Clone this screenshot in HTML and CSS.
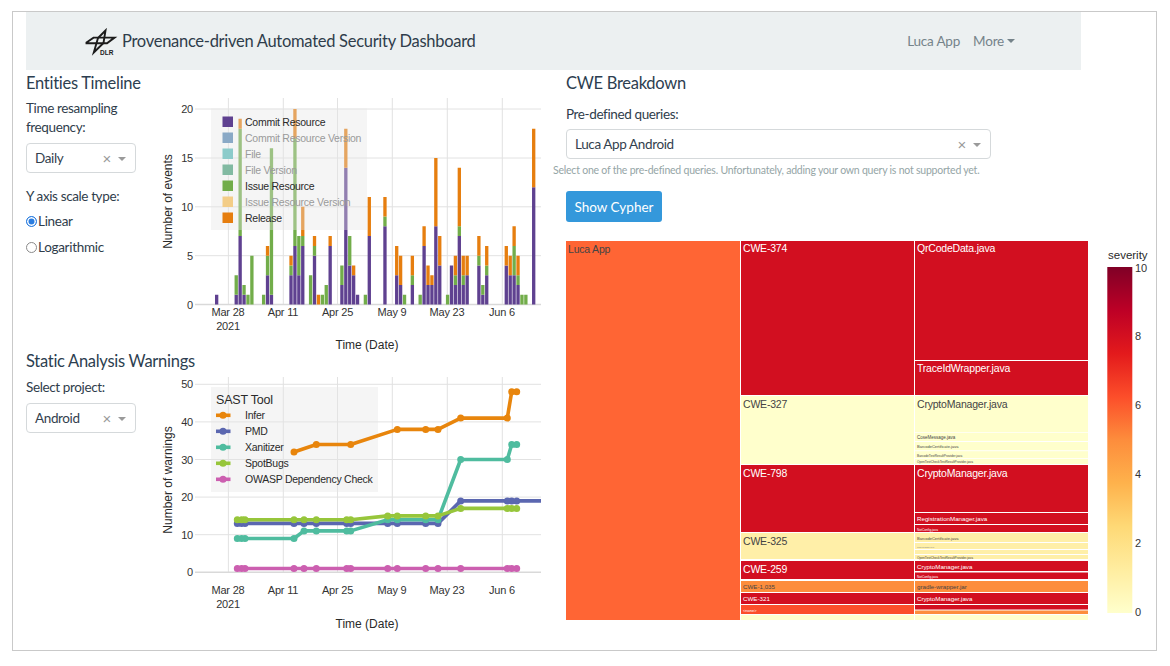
FILE: index.html
```html
<!DOCTYPE html>
<html lang="en">
<head>
<meta charset="utf-8">
<title>Provenance-driven Automated Security Dashboard</title>
<link rel="stylesheet" href="styles.css">
</head>
<body>
<div class="frame">
  <nav class="navbar">
    <div class="brand">
      <svg class="logo" viewBox="84 26 34 28" width="34" height="28" aria-label="DLR logo">
        <path class="logo-line" d="M86.5 40.5L93.5 35.6H114.5L107 41.2H86.5Z"/>
        <path class="logo-line" d="M105.5 28.5L98 36L93.8 50.5L103.5 41L105.5 28.5Z"/>
        <text class="logo-text" x="100" y="53">DLR</text>
      </svg>
      <span class="brand-name">Provenance-driven Automated Security Dashboard</span>
    </div>
    <div class="nav-links">
      <a class="nav-link">Luca App</a>
      <a class="nav-link">More<span class="caret"></span></a>
    </div>
  </nav>
  <div class="columns">
    <section class="left">
      <h2 class="title">Entities Timeline</h2>
      <div class="panel panel-a">
        <div class="controls">
          <label class="label">Time resampling frequency:</label>
          <div class="select select-narrow"><span class="select-value">Daily</span><span class="clear">×</span><span class="arrow"></span></div>
          <label class="label label-gap">Y axis scale type:</label>
          <div class="radio"><span class="dot dot-on"></span>Linear</div>
          <div class="radio"><span class="dot"></span>Logarithmic</div>
        </div>
        <svg class="chart chart-a" viewBox="150 96 395 256" width="395" height="256">
          <g class="grid">
            <path d="M228.4 98V304M283.3 98V304M337.5 98V304M392.3 98V304M447.3 98V304M502.3 98V304"/>
            <path d="M195 109H541M195 158H541M195 206.8H541M195 255.7H541"/>
          </g>
          <path class="zero" d="M195 304.5H541"/>
          <g transform="translate(228.4 304.5) scale(3.914 -9.77)" class="bars">
            <path class="b-commit" d="M-3 0V1M2 0V1M3 0V7M4 0V1M10 0V3M11 0V1M16 0V3M17 0V6M18 0V3M19 0V6M22 0V5M26 0V6M29 0V2M30 0V14M31 0V4M32 0V3M33 0V1M36 0V7M40 0V8M43 0V3M44 0V2M47 0V2M50 0V6M51 0V2M52 0V2M53 0V8M54 0V4M57 0V4M58 0V2M59 0V7M60 0V2M61 0V3M64 0V4M65 0V1M66 0V3M71 0V4M72 0V3M73 0V3M74 0V2M78 0V12"/>
            <path class="b-issue" d="M2 1V3M3 7V18M4 1V2M5 0V1M6 0V5M9 0V1M10 3V5M11 1V16M16 3V4M17 6V17M18 3V7M19 6V7M21 0V3M22 5V6M24 0V1M25 0V2M29 2V4M31 4V7M35 0V1M40 8V9M45 0V1M47 2V3M49 0V1M56 0V1M58 2V3M59 7V8M60 2V3M64 4V5M65 1V2M66 3V4M73 3V6M74 2V3M75 0V1M76 0V1"/>
            <path class="b-release" d="M3 18V19M10 5V6M16 4V5M17 17V20M19 7V10M22 6V7M23 0V1M26 6V7M30 14V18M32 3V4M36 7V11M40 9V11M43 3V6M44 2V5M47 3V5M50 6V8M51 2V4M52 2V3M53 8V15M54 4V7M58 3V5M59 8V14M60 3V5M61 3V5M64 5V7M66 4V6M71 4V6M72 3V5M73 6V8M74 3V5M78 12V18"/>
          </g>
          <rect class="legend-bg" x="211" y="108.5" width="156" height="121.5"/>
          <g class="swatches">
            <rect class="s-commit" x="222.5" y="116.5" width="10.5" height="10.5"/>
            <rect class="s-commitv" x="222.5" y="132.5" width="10.5" height="10.5"/>
            <rect class="s-file" x="222.5" y="148.5" width="10.5" height="10.5"/>
            <rect class="s-filev" x="222.5" y="164.5" width="10.5" height="10.5"/>
            <rect class="s-issue" x="222.5" y="180.5" width="10.5" height="10.5"/>
            <rect class="s-issuev" x="222.5" y="196.5" width="10.5" height="10.5"/>
            <rect class="s-release" x="222.5" y="212.5" width="10.5" height="10.5"/>
          </g>
          <g class="legend">
            <text x="245" y="125.5">Commit Resource</text>
            <text class="off" x="245" y="141.5">Commit Resource Version</text>
            <text class="off" x="245" y="157.5">File</text>
            <text class="off" x="245" y="173.5">File Version</text>
            <text x="245" y="189.5">Issue Resource</text>
            <text class="off" x="245" y="205.5">Issue Resource Version</text>
            <text x="245" y="221.5">Release</text>
          </g>
          <g class="tick tick-y">
            <text x="193" y="113">20</text>
            <text x="193" y="162">15</text>
            <text x="193" y="211">10</text>
            <text x="193" y="260">5</text>
            <text x="193" y="308.5">0</text>
          </g>
          <g class="tick tick-x">
            <text x="228" y="316">Mar 28</text>
            <text x="228" y="329.5">2021</text>
            <text x="283" y="316">Apr 11</text>
            <text x="337.5" y="316">Apr 25</text>
            <text x="392" y="316">May 9</text>
            <text x="447" y="316">May 23</text>
            <text x="502" y="316">Jun 6</text>
          </g>
          <text class="axis-title" x="367" y="349">Time (Date)</text>
          <text class="axis-title" transform="translate(172 201.5) rotate(-90)">Number of events</text>
        </svg>
      </div>
      <h2 class="title title-b">Static Analysis Warnings</h2>
      <div class="panel panel-b">
        <div class="controls">
          <label class="label">Select project:</label>
          <div class="select select-narrow"><span class="select-value">Android</span><span class="clear">×</span><span class="arrow"></span></div>
        </div>
        <svg class="chart chart-b" viewBox="150 374 395 266" width="395" height="266">
          <g class="grid">
            <path d="M228.4 377V572M283.3 377V572M337.5 377V572M392.3 377V572M447.3 377V572M502.3 377V572"/>
            <path d="M195 384.3H541M195 421.9H541M195 459.5H541M195 497.1H541M195 534.7H541"/>
          </g>
          <path class="zero" d="M195 572.3H541"/>
          <rect class="legend-bg" x="211" y="387" width="167" height="105"/>
          <polyline class="line l-infer" points="294,452 316.3,444.5 350.7,444.5 397.3,429.4 425.7,429.4 438,429.4 460.7,418.1 507.3,418.1 511.7,391.8 516.7,391.8"/>
          <path class="marks l-infer" d="M294 452h0M316.3 444.5h0M350.7 444.5h0M397.3 429.4h0M425.7 429.4h0M438 429.4h0M460.7 418.1h0M507.3 418.1h0M511.7 391.8h0M516.7 391.8h0"/>
          <polyline class="line l-pmd" points="237.3,523.4 245,523.4 294,523.4 350.7,523.4 438,523.4 460.7,500.9 541,500.9"/>
          <path class="marks l-pmd" d="M237.3 523.4h0M241.7 523.4h0M245 523.4h0M294 523.4h0M304 523.4h0M316.3 523.4h0M346.7 523.4h0M350.7 523.4h0M387.7 523.4h0M397.3 523.4h0M425.7 523.4h0M438 523.4h0M460.7 500.9h0M507.3 500.9h0M511.7 500.9h0M516.7 500.9h0"/>
          <polyline class="line l-xan" points="237.3,538.5 294,538.5 304,530.9 350.7,530.9 387.7,519.7 438,519.7 460.7,459.5 507.3,459.5 511.7,444.5 516.7,444.5"/>
          <path class="marks l-xan" d="M237.3 538.5h0M241.7 538.5h0M245 538.5h0M294 538.5h0M304 530.9h0M316.3 530.9h0M346.7 530.9h0M350.7 530.9h0M387.7 519.7h0M397.3 519.7h0M425.7 519.7h0M438 519.7h0M460.7 459.5h0M507.3 459.5h0M511.7 444.5h0M516.7 444.5h0"/>
          <polyline class="line l-spot" points="237.3,519.7 350.7,519.7 387.7,515.9 438,515.9 460.7,508.4 516.7,508.4"/>
          <path class="marks l-spot" d="M237.3 519.7h0M241.7 519.7h0M245 519.7h0M294 519.7h0M304 519.7h0M316.3 519.7h0M346.7 519.7h0M350.7 519.7h0M387.7 515.9h0M397.3 515.9h0M425.7 515.9h0M438 515.9h0M460.7 508.4h0M507.3 508.4h0M511.7 508.4h0M516.7 508.4h0"/>
          <polyline class="line l-owasp" points="237.3,568.5 516.7,568.5"/>
          <path class="marks l-owasp" d="M237.3 568.5h0M241.7 568.5h0M245 568.5h0M294 568.5h0M304 568.5h0M316.3 568.5h0M346.7 568.5h0M350.7 568.5h0M387.7 568.5h0M397.3 568.5h0M425.7 568.5h0M438 568.5h0M460.7 568.5h0M507.3 568.5h0M511.7 568.5h0M516.7 568.5h0"/>
          <g>
            <path class="key l-infer" d="M216 415.3H230.5"/><path class="marks l-infer" d="M223 415.3h0"/>
            <path class="key l-pmd" d="M216 431.3H230.5"/><path class="marks l-pmd" d="M223 431.3h0"/>
            <path class="key l-xan" d="M216 447.3H230.5"/><path class="marks l-xan" d="M223 447.3h0"/>
            <path class="key l-spot" d="M216 463.3H230.5"/><path class="marks l-spot" d="M223 463.3h0"/>
            <path class="key l-owasp" d="M216 479.3H230.5"/><path class="marks l-owasp" d="M223 479.3h0"/>
          </g>
          <text class="legend-title" x="216" y="403.5">SAST Tool</text>
          <g class="legend">
            <text x="245" y="419">Infer</text>
            <text x="245" y="435">PMD</text>
            <text x="245" y="451">Xanitizer</text>
            <text x="245" y="467">SpotBugs</text>
            <text x="245" y="483">OWASP Dependency Check</text>
          </g>
          <g class="tick tick-y">
            <text x="193" y="388.3">50</text>
            <text x="193" y="426">40</text>
            <text x="193" y="463.5">30</text>
            <text x="193" y="501">20</text>
            <text x="193" y="538.7">10</text>
            <text x="193" y="576.3">0</text>
          </g>
          <g class="tick tick-x">
            <text x="228" y="594">Mar 28</text>
            <text x="228" y="607.5">2021</text>
            <text x="283" y="594">Apr 11</text>
            <text x="337.5" y="594">Apr 25</text>
            <text x="392" y="594">May 9</text>
            <text x="447" y="594">May 23</text>
            <text x="502" y="594">Jun 6</text>
          </g>
          <text class="axis-title" x="367" y="628">Time (Date)</text>
          <text class="axis-title" transform="translate(172 480) rotate(-90)">Number of warnings</text>
        </svg>
      </div>
    </section>
    <section class="right">
      <h2 class="title">CWE Breakdown</h2>
      <label class="label label-query">Pre-defined queries:</label>
      <div class="select select-wide"><span class="select-value">Luca App Android</span><span class="clear">×</span><span class="arrow"></span></div>
      <p class="hint">Select one of the pre-defined queries. Unfortunately, adding your own query is not supported yet.</p>
      <button class="button">Show Cypher</button>
      <svg class="treemap" viewBox="566 236 590 390" width="590" height="390">
        <defs>
          <linearGradient id="ylorrd" x1="0" y1="1" x2="0" y2="0">
            <stop offset="0" stop-color="#ffffcc"/>
            <stop offset=".125" stop-color="#ffeda0"/>
            <stop offset=".25" stop-color="#fed976"/>
            <stop offset=".375" stop-color="#feb24c"/>
            <stop offset=".5" stop-color="#fd8d3c"/>
            <stop offset=".625" stop-color="#fc4e2a"/>
            <stop offset=".75" stop-color="#e31a1c"/>
            <stop offset=".875" stop-color="#bd0026"/>
            <stop offset="1" stop-color="#800026"/>
          </linearGradient>
        </defs>
        <rect class="c-root" x="566" y="241" width="174" height="379"/>
        <text class="t-dark t11" x="568" y="252.5">Luca App</text>

        <rect class="c-red" x="741" y="241" width="173" height="154"/>
        <rect class="c-red" x="915" y="241" width="173" height="119"/>
        <rect class="c-red" x="915" y="361" width="173" height="34"/>
        <text class="t-light t11" x="743" y="252">CWE-374</text>
        <text class="t-light t11" x="917" y="252">QrCodeData.java</text>
        <text class="t-light t11" x="917" y="372">TraceIdWrapper.java</text>

        <rect class="c-pale" x="741" y="396" width="173" height="68"/>
        <rect class="c-pale" x="915" y="396" width="173" height="36"/>
        <rect class="c-pale" x="915" y="432.7" width="173" height="8.3"/>
        <rect class="c-pale" x="915" y="442" width="173" height="8.3"/>
        <rect class="c-pale" x="915" y="451.2" width="173" height="7"/>
        <rect class="c-pale" x="915" y="459" width="173" height="5"/>
        <text class="t-dark t11" x="743" y="408">CWE-327</text>
        <text class="t-dark t11" x="917" y="408">CryptoManager.java</text>
        <text class="t-dark t5" x="917" y="439">CoseMessage.java</text>
        <text class="t-dark t4" x="917" y="448">BarcodeCertificate.java</text>
        <text class="t-dark t3" x="917" y="457">BarcodeTestResultProvider.java</text>
        <text class="t-dark t3" x="917" y="463">OpenTestCheckTestResultProvider.java</text>

        <rect class="c-red" x="741" y="465" width="173" height="67"/>
        <rect class="c-red" x="915" y="465" width="173" height="47"/>
        <rect class="c-red" x="915" y="513" width="173" height="11"/>
        <rect class="c-red" x="915" y="525" width="173" height="7"/>
        <text class="t-light t11" x="743" y="477">CWE-798</text>
        <text class="t-light t11" x="917" y="477">CryptoManager.java</text>
        <text class="t-light t6" x="917" y="521">RegistrationManager.java</text>
        <text class="t-light t3" x="917" y="530.5">NotConfig.java</text>

        <rect class="c-cream" x="741" y="533" width="173" height="26"/>
        <rect class="c-cream" x="915" y="533" width="173" height="9"/>
        <rect class="c-cream" x="915" y="543" width="173" height="6"/>
        <rect class="c-cream" x="915" y="550" width="173" height="4"/>
        <rect class="c-cream" x="915" y="555" width="173" height="4"/>
        <text class="t-dark t11" x="743" y="545">CWE-325</text>
        <text class="t-dark t4" x="917" y="539.5">BarcodeCertificate.java</text>
        <text class="t-dim t2" x="917" y="547.5">CoseMessage.java</text>
        <text class="t-dark t3" x="917" y="558.5">OpenTestCheckTestResultProvider.java</text>

        <rect class="c-red" x="741" y="561" width="173" height="18"/>
        <rect class="c-red" x="915" y="561" width="173" height="10"/>
        <rect class="c-red" x="915" y="572.5" width="173" height="6.5"/>
        <text class="t-light t11" x="743" y="573">CWE-259</text>
        <text class="t-light t6" x="917" y="569">CryptoManager.java</text>
        <text class="t-light t3" x="917" y="577.5">NotConfig.java</text>

        <rect class="c-orange" x="741" y="581" width="173" height="11"/>
        <rect class="c-orange" x="915" y="581" width="173" height="11"/>
        <text class="t-dark t6" x="743" y="589">CWE-1,035</text>
        <text class="t-dark t6" x="917" y="589">gradle-wrapper.jar</text>

        <rect class="c-red" x="741" y="593" width="173" height="11"/>
        <rect class="c-red" x="915" y="593" width="173" height="11"/>
        <text class="t-light t6" x="743" y="601">CWE-321</text>
        <text class="t-light t6" x="917" y="601">CryptoManager.java</text>

        <rect class="c-none" x="741" y="605" width="173" height="9"/>
        <rect class="c-red" x="915" y="605" width="173" height="4.5"/>
        <rect class="c-orange" x="915" y="610.5" width="173" height="3.5"/>
        <text class="t-light t4" x="743" y="611.5">&lt;none&gt;</text>

        <rect class="c-pale" x="741" y="615" width="173" height="5"/>
        <rect class="c-pale" x="915" y="615" width="173" height="5"/>

        <text class="bar-title" x="1108" y="258.5">severity</text>
        <rect x="1107.3" y="267" width="25" height="346" fill="url(#ylorrd)"/>
        <g class="bar-tick">
          <text x="1135" y="272">10</text>
          <text x="1135" y="340">8</text>
          <text x="1135" y="409">6</text>
          <text x="1135" y="478">4</text>
          <text x="1135" y="547">2</text>
          <text x="1135" y="616">0</text>
        </g>
      </svg>
    </section>
  </div>
</div>
</body>
</html>
```
FILE: styles.css
```css
* { box-sizing: border-box; }
html, body { margin: 0; padding: 0; background: #fff; }
body { font-family: Lato, "Liberation Sans", sans-serif; color: #2c3e50; width: 1170px; height: 666px; overflow: hidden; }

.frame { margin: 11px 0 0 12px; width: 1145px; height: 640px; border: 1px solid #c9c9c9; padding-left: 13px; }

.navbar { width: 1055px; height: 58px; background: #ecf0f1; display: flex; align-items: center; justify-content: space-between; padding-left: 58px; padding-right: 66px; }
.brand { display: flex; align-items: center; gap: 4px; }
.logo { display: block; margin-top: 1px; }
.logo-line { fill: none; stroke: #1c1c1c; stroke-width: 1.9; }
.logo-text { font: bold 6.5px "Liberation Sans", sans-serif; fill: #222; }
.brand-name { font-size: 16.5px; letter-spacing: -.28px; color: #2f3d4b; }
.nav-links { display: flex; gap: 13px; }
.nav-link { font-size: 13.5px; letter-spacing: -.2px; color: #75838a; display: flex; align-items: center; }
.caret { width: 0; height: 0; margin-left: 3px; border: 4px solid transparent; border-top-color: #75838a; border-bottom: 0; }

.columns { display: flex; }
.left { width: 515px; }
.right { margin-left: 25px; width: 590px; }

.title { margin: 2px 0 0; font-size: 16.5px; line-height: 22px; letter-spacing: -.28px; font-weight: 400; color: #2c3e50; }
.title-b { margin-top: -2px; }

.panel { display: flex; margin-top: 2px; }
.controls { width: 124px; flex: none; padding-top: 3px; }
.panel-b .controls { padding-top: 4px; }
.label { display: block; font-size: 13.5px; line-height: 19px; letter-spacing: -.38px; color: #2f3d4b; width: 110px; }
.label-gap { margin-top: 14px; }
.label-query { width: auto; margin-top: 11px; }

.select { display: flex; align-items: center; height: 30px; margin-top: 6px; padding: 0 9px 0 8px; border: 1px solid #d5d9db; border-radius: 4px; background: #fff; font-size: 13.5px; letter-spacing: -.38px; }
.select-narrow { width: 110px; }
.select-wide { width: 425px; margin-top: 5px; }
.select-value { flex: 1; color: #33414e; }
.clear { font-family: "Liberation Sans", sans-serif; font-size: 15px; color: #9a9a9a; margin-right: 7px; line-height: 1; }
.arrow { width: 0; height: 0; border: 4px solid transparent; border-top-color: #9a9a9a; border-bottom: 0; margin-top: 2px; }

.radio { display: flex; align-items: center; font-size: 13.5px; line-height: 19px; letter-spacing: -.3px; margin-top: 5.5px; color: #2f3d4b; }
.radio + .radio { margin-top: 7px; }
.dot { width: 11px; height: 11px; border-radius: 50%; border: 1px solid #8a8a8a; background: #fff; margin-right: 1px; flex: none; }
.dot-on { border: 1px solid #2a7de0; background: #2a7de0; box-shadow: inset 0 0 0 1.5px #fff; }

.chart { display: block; flex: none; }
.grid path { stroke: #e2e2e2; stroke-width: 1; fill: none; }
.zero { stroke: #d9d9d9; stroke-width: 1.6; fill: none; }
.bars path { fill: none; stroke-width: .85; }
.b-commit { stroke: #5f4190; }
.b-issue { stroke: #72ad4a; }
.b-release { stroke: #e67e0f; }
.legend-bg { fill: rgba(230, 230, 230, .38); }
.s-commit { fill: #5f4190; }
.s-commitv { fill: #8aa9c6; }
.s-file { fill: #8ccbca; }
.s-filev { fill: #82baa2; }
.s-issue { fill: #72ad4a; }
.s-issuev { fill: #f3cd87; }
.s-release { fill: #e67e0f; }
.legend text { font: 10.5px "Liberation Sans", sans-serif; letter-spacing: -.25px; fill: #2a2a2a; }
.legend text.off { fill: #9a9a9a; }
.legend-title { font: 12.5px "Liberation Sans", sans-serif; letter-spacing: -.2px; fill: #2a2a2a; }
.tick text { font: 11px "Liberation Sans", sans-serif; letter-spacing: -.2px; fill: #333; }
.tick-y text { text-anchor: end; }
.tick-x text { text-anchor: middle; }
.axis-title { font: 12px "Liberation Sans", sans-serif; fill: #2a2a2a; text-anchor: middle; }

.line { fill: none; stroke-width: 3.6; stroke-linejoin: round; }
.key { fill: none; stroke-width: 3.6; }
.marks { fill: none; stroke-width: 7; stroke-linecap: round; }
.l-infer { stroke: #e8850c; }
.l-pmd { stroke: #5b67b0; }
.l-xan { stroke: #4fbc9f; }
.l-spot { stroke: #97c63b; }
.l-owasp { stroke: #cc5fb0; }

.hint { margin: 4px 0 0 -13px; font-size: 10.5px; line-height: 14px; letter-spacing: -.22px; color: #95a5a6; white-space: nowrap; }
.button { display: block; margin-top: 14px; width: 96px; height: 31px; padding: 0; background: #3498db; border: 0; border-radius: 3px; color: #fff; font: 13.5px Lato, sans-serif; }
.treemap { display: block; margin-top: 14px; }

.c-root { fill: #ff6534; }
.c-red { fill: #d20f20; }
.c-pale { fill: #ffffcc; }
.c-cream { fill: #ffefa8; }
.c-orange { fill: #fd8d3c; }
.c-none { fill: #fc4e2a; }
text.t-dark { fill: #444; }
text.t-light { fill: #fff; }
text.t-dim { fill: #888; }
.t11, .t6, .t5, .t4, .t3, .t2 { font-family: "Liberation Sans", sans-serif; }
.t11 { font-size: 10.5px; letter-spacing: -.2px; }
.t6 { font-size: 6.2px; }
.t5 { font-size: 4.5px; }
.t4 { font-size: 4px; }
.t3 { font-size: 3.2px; }
.t2 { font-size: 2px; }
.bar-title { font: 11.5px "Liberation Sans", sans-serif; fill: #2a2a2a; }
.bar-tick text { font: 11px "Liberation Sans", sans-serif; fill: #333; }
```
